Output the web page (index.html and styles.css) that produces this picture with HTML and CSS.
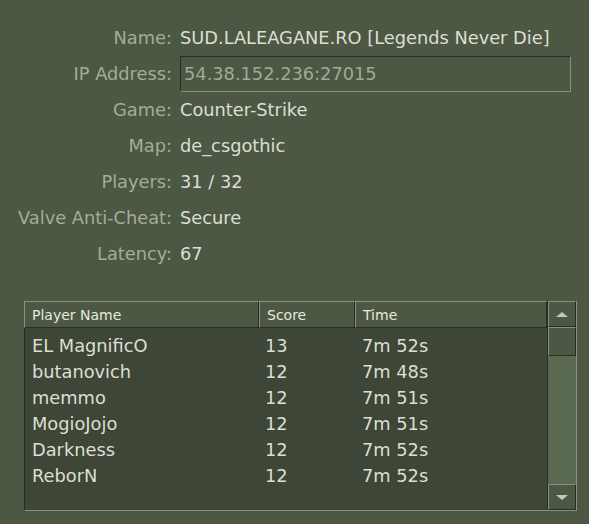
FILE: index.html
```html
<!DOCTYPE html>
<html>
<head>
<meta charset="utf-8">
<link rel="stylesheet" href="styles.css">
</head>
<body>
<div class="info">
  <div class="row"><span class="label">Name:</span><span class="value">SUD.LALEAGANE.RO [Legends Never Die]</span></div>
  <div class="row"><span class="label">IP Address:</span><span class="field">54.38.152.236:27015</span></div>
  <div class="row"><span class="label">Game:</span><span class="value">Counter-Strike</span></div>
  <div class="row"><span class="label">Map:</span><span class="value">de_csgothic</span></div>
  <div class="row"><span class="label">Players:</span><span class="value">31 / 32</span></div>
  <div class="row"><span class="label">Valve Anti-Cheat:</span><span class="value">Secure</span></div>
  <div class="row"><span class="label">Latency:</span><span class="value">67</span></div>
</div>
<div class="list">
  <div class="main">
    <div class="header">
      <div class="hcell c-name">Player Name</div>
      <div class="hcell c-score">Score</div>
      <div class="hcell c-time">Time</div>
    </div>
    <div class="body">
      <div class="prow"><span class="c-name">EL MagnificO</span><span class="c-score">13</span><span class="c-time">7m 52s</span></div>
      <div class="prow"><span class="c-name">butanovich</span><span class="c-score">12</span><span class="c-time">7m 48s</span></div>
      <div class="prow"><span class="c-name">memmo</span><span class="c-score">12</span><span class="c-time">7m 51s</span></div>
      <div class="prow"><span class="c-name">MogioJojo</span><span class="c-score">12</span><span class="c-time">7m 51s</span></div>
      <div class="prow"><span class="c-name">Darkness</span><span class="c-score">12</span><span class="c-time">7m 52s</span></div>
      <div class="prow"><span class="c-name">ReborN</span><span class="c-score">12</span><span class="c-time">7m 52s</span></div>
    </div>
  </div>
  <div class="scroll">
    <div class="sbtn up"><span class="arrow-up"></span></div>
    <div class="thumb"></div>
    <div class="track"></div>
    <div class="sbtn down"><span class="arrow-down"></span></div>
  </div>
</div>
</body>
</html>
```
FILE: styles.css
```css
html, body {
  margin: 0;
  padding: 0;
  background: #4c5844;
  width: 589px;
  height: 524px;
  overflow: hidden;
}
body {
  font-family: "DejaVu Sans", sans-serif;
  font-size: 17.8px;
  color: #dcdfd2;
}
.info {
  padding-top: 19px;
  display: flex;
  flex-direction: column;
}
.row {
  display: flex;
  align-items: center;
  height: 36px;
}
.label {
  width: 172px;
  text-align: right;
  color: #a3ad98;
  flex: none;
}
.value {
  margin-left: 8px;
  color: #dcdfd2;
}
.field {
  margin-left: 8px;
  box-sizing: border-box;
  width: 391px;
  height: 36px;
  border-top: 1px solid #282e22;
  border-left: 1px solid #282e22;
  border-bottom: 1px solid #889180;
  border-right: 1px solid #889180;
  color: #a0aa95;
  display: flex;
  align-items: center;
  padding-left: 3px;
  margin-top: 1px;
}
.list {
  margin: 30px 0 0 24px;
  width: 553px;
  height: 210px;
  box-sizing: border-box;
  display: flex;
  border-left: 1px solid #282e22;
  border-bottom: 1px solid #889180;
  border-right: 1px solid #889180;
}
.main {
  flex: 1;
  display: flex;
  flex-direction: column;
  background: #3e4637;
}
.header {
  display: flex;
  height: 27px;
  margin-left: -1px;
  background: #4c5844;
}
.hcell {
  box-sizing: border-box;
  border-top: 1px solid #889180;
  border-left: 1px solid #889180;
  border-bottom: 1px solid #282e22;
  border-right: 1px solid #282e22;
  color: #e6e9de;
  font-size: 14px;
  display: flex;
  align-items: center;
  padding-left: 7px;
}
.header .c-name { width: 235px; }
.header .c-score { width: 96px; }
.header .c-time { flex: 1; }
.body {
  padding-top: 4px;
}
.prow {
  display: flex;
  height: 26px;
  align-items: center;
}
.prow .c-name { width: 233px; padding-left: 7px; }
.prow .c-score { width: 97px; }
.prow .c-time { flex: 1; }
.scroll {
  width: 28px;
  display: flex;
  flex-direction: column;
  background: #5a6a50;
  border-left: 1px solid #282e22;
}
.sbtn, .thumb {
  box-sizing: border-box;
  border-top: 1px solid #889180;
  border-left: 1px solid #889180;
  border-bottom: 1px solid #282e22;
  border-right: 1px solid #282e22;
  background: #4c5844;
  display: flex;
  align-items: center;
  justify-content: center;
}
.sbtn { height: 26px; }
.thumb { height: 29px; }
.track { flex: 1; }
.arrow-up {
  width: 0; height: 0;
  border-left: 6px solid transparent;
  border-right: 6px solid transparent;
  border-bottom: 5px solid #c4c9bc;
}
.arrow-down {
  width: 0; height: 0;
  border-left: 6px solid transparent;
  border-right: 6px solid transparent;
  border-top: 5px solid #c4c9bc;
}
```
